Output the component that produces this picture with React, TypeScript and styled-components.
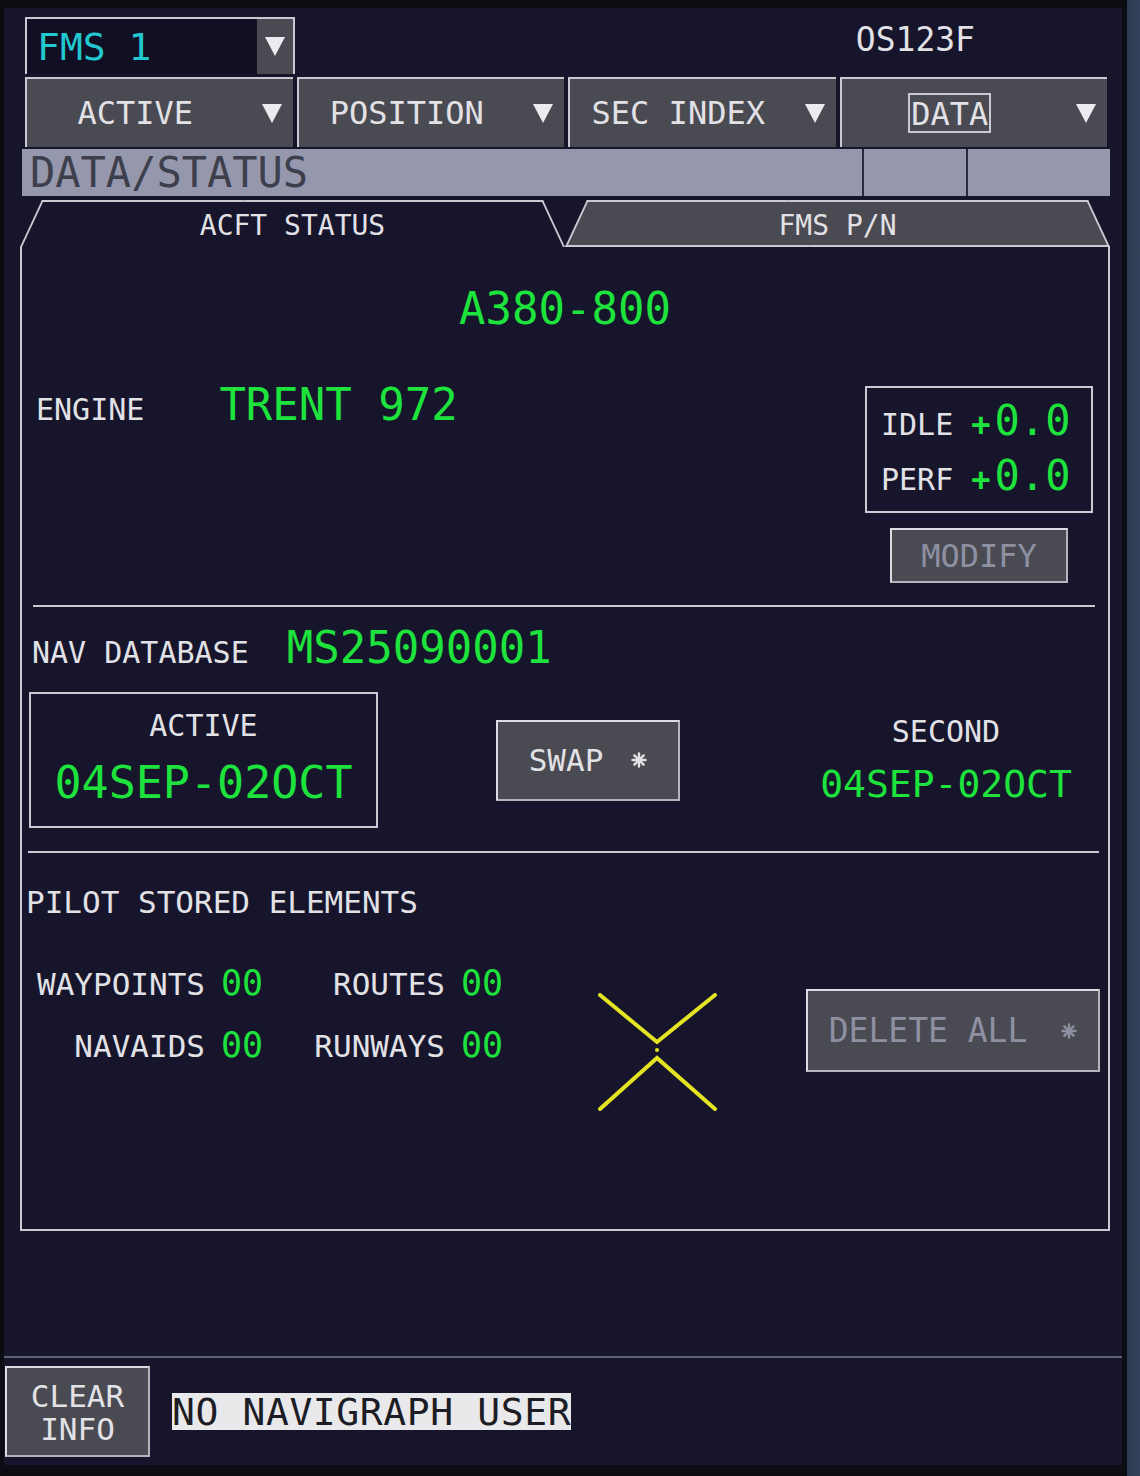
import styled, { createGlobalStyle } from "styled-components";

const GlobalStyle = createGlobalStyle`
  html, body {
    margin: 0;
    padding: 0;
  }
  body {
    width: 1140px;
    height: 1476px;
    overflow: hidden;
    background: linear-gradient(90deg, #0c0d13 0, #0c0d13 1127px, #2b394e 1127px, #34445c 1140px);
    font-family: "DejaVu Sans Mono", "Liberation Mono", monospace;
  }
`;

const LIGHT = "#c9c9d1";
const GREY = "#4a4a52";
const GREEN = "#1ee33c";
const WHITE = "#e2e2e6";
const NAVY = "#16152c";

const Screen = styled.div`
  margin: 8px 0 0 4px;
  width: 1118px;
  height: 1457px;
  background: ${NAVY};
  color: ${WHITE};
  display: flex;
  flex-direction: column;
`;

const Header = styled.div`
  padding: 9px 15px 0 21px;
  display: flex;
  flex-direction: column;
`;

const TopRow = styled.div`
  display: flex;
  align-items: flex-start;
  height: 57px;
  margin-bottom: 3px;
`;

const FmsSelect = styled.div`
  width: 270px;
  height: 57px;
  box-sizing: border-box;
  border: 2px solid ${LIGHT};
  border-bottom: none;
  background: #110f23;
  display: flex;
`;

const FmsLabel = styled.div`
  flex: 1;
  display: flex;
  align-items: center;
  padding-left: 10px;
  font-size: 38px;
  color: #22c8d0;
`;

const ArrowCell = styled.div`
  width: 36px;
  background: ${GREY};
  display: flex;
  align-items: center;
  justify-content: center;
`;

const Arrow = styled.span`
  width: 0;
  height: 0;
  border-left: 10px solid transparent;
  border-right: 10px solid transparent;
  border-top: 19px solid #ececf0;
`;

const Callsign = styled.div`
  margin-left: auto;
  margin-right: 132px;
  margin-top: 6px;
  font-size: 33px;
  line-height: 33px;
`;

const MenuRow = styled.div`
  display: flex;
  gap: 4px;
`;

const MenuButton = styled.div`
  flex: 1;
  height: 70px;
  box-sizing: border-box;
  background: ${GREY};
  border-top: 2px solid ${LIGHT};
  border-left: 2px solid ${LIGHT};
  display: flex;
  align-items: center;
  padding-right: 11px;
`;

const MenuLabel = styled.div`
  flex: 1;
  display: flex;
  justify-content: center;
  padding-right: 18px;
  font-size: 32px;
`;

const Boxed = styled.span`
  border: 2px solid ${LIGHT};
  padding: 2px 1px 0;
  line-height: 34px;
`;

const StatusBar = styled.div`
  margin: 2px -3px 0 -3px;
  height: 47px;
  background: #9598ac;
  display: flex;
`;

const StatusTitle = styled.div`
  flex: 1;
  font-size: 42px;
  line-height: 47px;
  color: #3d3f4d;
  padding-left: 8px;
`;

const StatusCell = styled.div<{ $w: number }>`
  width: ${(p) => p.$w}px;
  border-left: 2px solid #2a2a3a;
`;

const PanelArea = styled.div`
  margin: 4px 12px 0 16px;
  display: flex;
  flex-direction: column;
`;

const TabRow = styled.div`
  display: flex;
  height: 47px;
`;

const Tab = styled.div<{ $active?: boolean }>`
  position: relative;
  z-index: 0;
  flex: 1;
  display: flex;
  align-items: center;
  justify-content: center;
  padding-top: 4px;
  font-size: 28px;
  &::before,
  &::after {
    content: "";
    position: absolute;
    top: 0;
    bottom: 0;
    width: 55%;
    box-sizing: border-box;
    z-index: -1;
    background: ${(p) => (p.$active ? NAVY : GREY)};
    border-top: 2px solid ${LIGHT};
    border-bottom: ${(p) => (p.$active ? "none" : `2px solid ${LIGHT}`)};
  }
  &::before {
    left: 0;
    border-left: 2px solid ${LIGHT};
    transform-origin: bottom left;
    transform: skewX(-25deg);
  }
  &::after {
    right: 0;
    border-right: 2px solid ${LIGHT};
    transform-origin: bottom right;
    transform: skewX(25deg);
  }
`;

const Panel = styled.div`
  height: 984px;
  box-sizing: border-box;
  border: 2px solid ${LIGHT};
  border-top: none;
  display: flex;
  flex-direction: column;
`;

const AircraftType = styled.div`
  margin-top: 40px;
  text-align: center;
  font-size: 44px;
  line-height: 44px;
  color: ${GREEN};
`;

const EngineRow = styled.div`
  display: flex;
  align-items: flex-start;
  margin-top: 55px;
`;

const EngineInfo = styled.div`
  display: flex;
  align-items: baseline;
  margin: -3px 0 0 14px;
`;

const Label = styled.span<{ $size?: number }>`
  font-size: ${(p) => p.$size ?? 30}px;
  line-height: ${(p) => p.$size ?? 30}px;
  color: ${WHITE};
  white-space: pre;
`;

const Value = styled.span<{ $size?: number; $gap?: number; $bold?: boolean }>`
  font-size: ${(p) => p.$size ?? 44}px;
  line-height: ${(p) => p.$size ?? 44}px;
  margin-left: ${(p) => p.$gap ?? 0}px;
  font-weight: ${(p) => (p.$bold ? 700 : 400)};
  color: ${GREEN};
  white-space: pre;
`;

const ThrustColumn = styled.div`
  margin-left: auto;
  margin-right: 15px;
  display: flex;
  flex-direction: column;
  align-items: center;
`;

const ThrustBox = styled.div`
  width: 228px;
  box-sizing: border-box;
  border: 2px solid ${LIGHT};
  padding: 12px 0 14px 14px;
  display: flex;
  flex-direction: column;
  gap: 13px;
`;

const ThrustRow = styled.div`
  display: flex;
  align-items: baseline;
`;

const GreyButton = styled.div<{ $w: number; $h: number; $disabled?: boolean }>`
  width: ${(p) => p.$w}px;
  height: ${(p) => p.$h}px;
  box-sizing: border-box;
  background: ${GREY};
  border: 2px solid #b4b4bc;
  border-top-color: #dcdce2;
  border-left-color: #dcdce2;
  display: flex;
  align-items: center;
  justify-content: center;
  gap: 30px;
  font-size: 32px;
  color: ${(p) => (p.$disabled ? "#8e90a2" : WHITE)};
`;

const ModifyButton = styled(GreyButton)`
  margin-top: 15px;
`;

const Divider = styled.div<{ $l: number; $r: number; $t: number }>`
  height: 2px;
  background: ${LIGHT};
  margin: ${(p) => p.$t}px ${(p) => p.$r}px 0 ${(p) => p.$l}px;
`;

const NavRow = styled.div`
  display: flex;
  align-items: baseline;
  margin: 19px 0 0 10px;
`;

const DatabaseRow = styled.div`
  display: flex;
  align-items: center;
  margin: 22px 0 0 7px;
`;

const ActiveDbBox = styled.div`
  width: 349px;
  height: 136px;
  box-sizing: border-box;
  border: 2px solid ${LIGHT};
  padding-top: 17px;
  display: flex;
  flex-direction: column;
  align-items: center;
  gap: 19px;
`;

const SwapButton = styled(GreyButton)`
  margin-left: 118px;
  font-size: 31px;
  gap: 28px;
`;

const SecondDb = styled.div`
  margin-left: 110px;
  width: 312px;
  display: flex;
  flex-direction: column;
  align-items: center;
  gap: 18px;
`;

const PilotTitle = styled.div`
  margin: 34px 0 0 4px;
  font-size: 31px;
  line-height: 31px;
`;

const StoredRow = styled.div`
  display: flex;
  align-items: flex-start;
  margin-top: 48px;
`;

const StoredGrid = styled.div`
  display: grid;
  grid-template-columns: 175px 42px 166px 42px;
  column-gap: 16px;
  row-gap: 27px;
  align-items: baseline;
  margin-left: 8px;
`;

const GridLabel = styled.span`
  font-size: 31px;
  line-height: 31px;
  text-align: right;
`;

const GridValue = styled.span`
  font-size: 35px;
  line-height: 35px;
  color: ${GREEN};
`;

const CrossMark = styled.svg`
  margin: 27px 0 0 95px;
  flex: none;
`;

const DeleteButton = styled(GreyButton)`
  margin: 23px 0 0 88px;
  font-size: 33px;
  gap: 34px;
`;

const BottomDivider = styled.div`
  margin-top: 125px;
  height: 2px;
  background: #5e5f70;
`;

const BottomBar = styled.div`
  display: flex;
  align-items: center;
  margin-top: 8px;
`;

const ClearButton = styled(GreyButton)`
  margin-left: 1px;
  flex-direction: column;
  gap: 0;
  font-size: 31px;
  line-height: 33px;
  padding-top: 2px;
`;

const Message = styled.div`
  margin-left: 22px;
  height: 37px;
  background: #e9e9ec;
  color: #1c1c24;
  font-size: 38px;
  line-height: 39px;
  letter-spacing: 0.6px;
  white-space: pre;
`;

function Star({ color }: { color: string }) {
  return (
    <svg width="16" height="16" viewBox="0 0 16 16">
      <g stroke={color} strokeWidth="2.4" strokeLinecap="round">
        <line x1="8" y1="1.5" x2="8" y2="14.5" />
        <line x1="1.5" y1="8" x2="14.5" y2="8" />
        <line x1="3.4" y1="3.4" x2="12.6" y2="12.6" />
        <line x1="12.6" y1="3.4" x2="3.4" y2="12.6" />
      </g>
    </svg>
  );
}

const menus = [
  { label: "ACTIVE" },
  { label: "POSITION" },
  { label: "SEC INDEX" },
  { label: "DATA", boxed: true },
];

const stored = [
  ["WAYPOINTS", "00", "ROUTES", "00"],
  ["NAVAIDS", "00", "RUNWAYS", "00"],
];

export default function App() {
  return (
    <>
      <GlobalStyle />
      <Screen>
        <Header>
          <TopRow>
            <FmsSelect>
              <FmsLabel>FMS 1</FmsLabel>
              <ArrowCell>
                <Arrow />
              </ArrowCell>
            </FmsSelect>
            <Callsign>OS123F</Callsign>
          </TopRow>
          <MenuRow>
            {menus.map((m) => (
              <MenuButton key={m.label}>
                <MenuLabel>{m.boxed ? <Boxed>{m.label}</Boxed> : m.label}</MenuLabel>
                <Arrow />
              </MenuButton>
            ))}
          </MenuRow>
          <StatusBar>
            <StatusTitle>DATA/STATUS</StatusTitle>
            <StatusCell $w={102} />
            <StatusCell $w={142} />
          </StatusBar>
        </Header>

        <PanelArea>
          <TabRow>
            <Tab $active>ACFT STATUS</Tab>
            <Tab>FMS P/N</Tab>
          </TabRow>
          <Panel>
            <AircraftType>A380-800</AircraftType>
            <EngineRow>
              <EngineInfo>
                <Label>ENGINE</Label>
                <Value $gap={75}>TRENT 972</Value>
              </EngineInfo>
              <ThrustColumn>
                <ThrustBox>
                  <ThrustRow>
                    <Label>IDLE </Label>
                    <Value $size={32} $bold>+</Value>
                    <Value $size={42} $gap={4}>0.0</Value>
                  </ThrustRow>
                  <ThrustRow>
                    <Label>PERF </Label>
                    <Value $size={32} $bold>+</Value>
                    <Value $size={42} $gap={4}>0.0</Value>
                  </ThrustRow>
                </ThrustBox>
                <ModifyButton $w={178} $h={55} $disabled>MODIFY</ModifyButton>
              </ThrustColumn>
            </EngineRow>
            <Divider $t={22} $l={11} $r={13} />

            <NavRow>
              <Label>NAV DATABASE</Label>
              <Value $gap={38}>MS25090001</Value>
            </NavRow>
            <DatabaseRow>
              <ActiveDbBox>
                <Label>ACTIVE</Label>
                <Value $size={45}>04SEP-02OCT</Value>
              </ActiveDbBox>
              <SwapButton $w={184} $h={81}>
                <span>SWAP</span>
                <Star color={WHITE} />
              </SwapButton>
              <SecondDb>
                <Label>SECOND</Label>
                <Value $size={38}>04SEP-02OCT</Value>
              </SecondDb>
            </DatabaseRow>
            <Divider $t={23} $l={6} $r={9} />

            <PilotTitle>PILOT STORED ELEMENTS</PilotTitle>
            <StoredRow>
              <StoredGrid>
                {stored.flat().map((t, i) =>
                  i % 2 === 0 ? <GridLabel key={i}>{t}</GridLabel> : <GridValue key={i}>{t}</GridValue>
                )}
              </StoredGrid>
              <CrossMark width="120" height="118" viewBox="0 0 120 118">
                <g stroke="#e4e422" strokeWidth="4" strokeLinecap="round" fill="none">
                  <polyline points="2,2 59,49 117,2" />
                  <polyline points="2,116 59,65 117,116" />
                </g>
                <circle cx="59" cy="57" r="2" fill="#e4e422" />
              </CrossMark>
              <DeleteButton $w={294} $h={83} $disabled>
                <span>DELETE ALL</span>
                <Star color="#8e90a2" />
              </DeleteButton>
            </StoredRow>
          </Panel>
        </PanelArea>

        <BottomDivider />
        <BottomBar>
          <ClearButton $w={145} $h={91}>
            <span>CLEAR</span>
            <span>INFO</span>
          </ClearButton>
          <Message>NO NAVIGRAPH USER</Message>
        </BottomBar>
      </Screen>
    </>
  );
}
